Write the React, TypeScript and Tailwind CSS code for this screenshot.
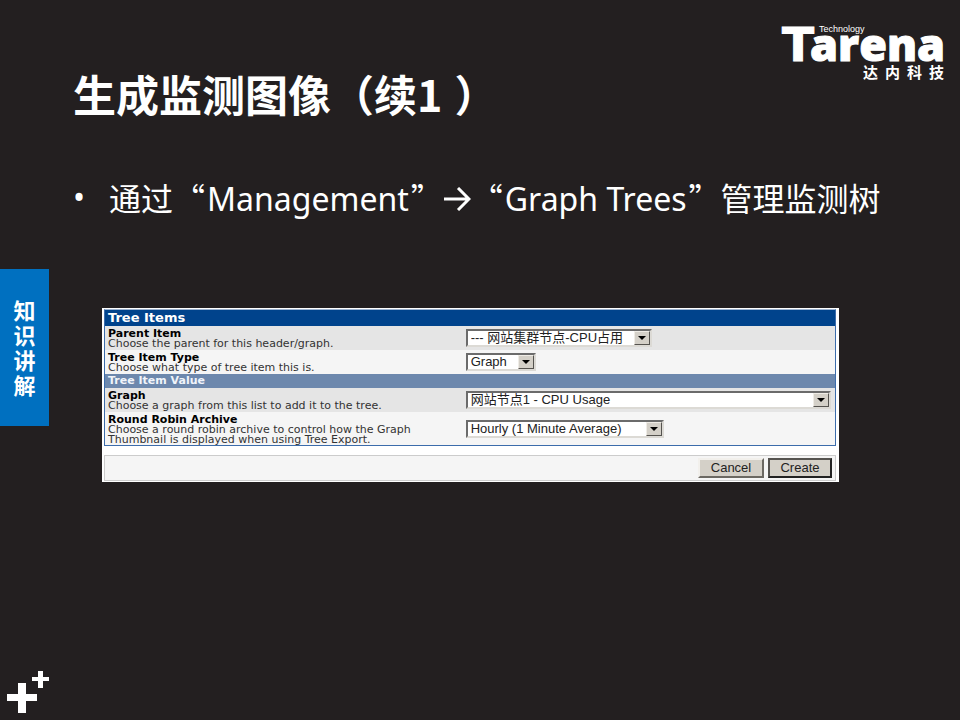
import React from "react";

type PickerProps = {
  id: string;
  width: string;
  options: string[];
};

function Picker({ id, width, options }: PickerProps) {
  return (
    <div
      className={`relative h-[18px] border-2 border-t-[#6b6b6b] border-l-[#6b6b6b] border-r-[#dcdad5] border-b-[#dcdad5] bg-white ${width}`}
    >
      <select
        id={id}
        className="block h-full w-full appearance-none bg-transparent pl-[3px] font-['Liberation_Sans','Noto_Sans_CJK_SC',sans-serif] text-[13px] leading-[14px] text-[#222222]"
      >
        {options.map((option) => (
          <option key={option}>{option}</option>
        ))}
      </select>
      <span className="pointer-events-none absolute inset-y-0 right-0 flex w-4 items-center justify-center border border-t-[#efece6] border-l-[#efece6] border-r-[#55534f] border-b-[#55534f] bg-[#d4d0c8]">
        <svg width="8" height="4" viewBox="0 0 8 4" aria-hidden="true">
          <path d="M0 0H8L4 4Z" fill="#000" />
        </svg>
      </span>
    </div>
  );
}

type FieldProps = PickerProps & {
  label: string;
  hint: string;
  tone: string;
};

function Field({ id, label, hint, tone, width, options }: FieldProps) {
  return (
    <div className={`grid min-h-6 grid-cols-[49%_1fr] ${tone}`}>
      <div className="pt-[3px] pr-4 pl-[3px] text-[11px] leading-[10px]">
        <label htmlFor={id} className="block font-bold text-black">
          {label}
        </label>
        <p className="text-[#333333]">{hint}</p>
      </div>
      <div className="self-center pr-1 pl-[3px]">
        <Picker id={id} width={width} options={options} />
      </div>
    </div>
  );
}

function TreeItemForm() {
  return (
    <form
      onSubmit={(event) => event.preventDefault()}
      className="bg-white py-px pr-[3px] pl-[2px] font-['DejaVu_Sans',sans-serif]"
    >
      <div className="border border-t-[#9db4d3] border-r-[#3c6cab] border-b-[#3c6cab] border-l-[#3c6cab]">
        <h2 className="bg-[#00438c] pl-[3px] text-[13px] leading-4 font-bold text-white">Tree Items</h2>
        <Field
          id="parent-item"
          label="Parent Item"
          hint="Choose the parent for this header/graph."
          tone="bg-[#e5e5e5]"
          width="w-[186px]"
          options={["--- 网站集群节点-CPU占用"]}
        />
        <Field
          id="item-type"
          label="Tree Item Type"
          hint="Choose what type of tree item this is."
          tone="bg-[#f5f5f5]"
          width="w-[70px]"
          options={["Graph"]}
        />
        <h3 className="bg-[#6d88ad] pl-[3px] text-[11px] leading-[14px] font-bold text-[#f0f4fa]">
          Tree Item Value
        </h3>
        <Field
          id="graph"
          label="Graph"
          hint="Choose a graph from this list to add it to the tree."
          tone="bg-[#e5e5e5]"
          width="w-full"
          options={["网站节点1 - CPU Usage"]}
        />
        <Field
          id="archive"
          label="Round Robin Archive"
          hint="Choose a round robin archive to control how the Graph Thumbnail is displayed when using Tree Export."
          tone="bg-[#f5f5f5]"
          width="w-[198px]"
          options={["Hourly (1 Minute Average)"]}
        />
      </div>
      <div className="mt-[9px] flex h-[26px] items-center justify-end gap-1 border border-[#cccccc] bg-[#f5f5f5] pr-[3px] font-['Liberation_Sans',sans-serif] text-[13px] leading-4 text-[#222222]">
        <button
          type="button"
          className="h-5 w-[66px] border-2 border-t-[#f2f0ec] border-l-[#f2f0ec] border-r-[#6b6862] border-b-[#6b6862] bg-[#d4d0c8]"
        >
          Cancel
        </button>
        <button
          type="submit"
          className="h-5 w-16 border-2 border-t-[#55534f] border-l-[#55534f] border-r-[#222222] border-b-[#222222] bg-[#d4d0c8]"
        >
          Create
        </button>
      </div>
    </form>
  );
}

function Logo() {
  return (
    <svg width="187" height="84" viewBox="0 0 187 84" role="img" aria-label="Tarena Technology 达内科技" fill="#fff">
      <g fontWeight="800" stroke="#fff" strokeWidth="1">
        <text x="9" y="61" fontFamily="'DejaVu Sans', sans-serif" fontSize="47">
          T
        </text>
        <text x="37" y="61" fontFamily="'Open Sans', sans-serif" fontSize="45">
          arena
        </text>
      </g>
      <text x="46" y="32" fontFamily="'Liberation Sans', sans-serif" fontSize="9">
        Technology
      </text>
      <g fontFamily="'Noto Sans CJK SC', sans-serif" fontWeight="700" fontSize="15">
        <text x="90" y="78">达</text>
        <text x="112" y="78">内</text>
        <text x="134" y="78">科</text>
        <text x="156" y="78">技</text>
      </g>
    </svg>
  );
}

function CjkQuote({ children }: { children: string }) {
  return <span className="font-['Noto_Sans_CJK_SC',sans-serif]">{children}</span>;
}

function Arrow() {
  return (
    <svg width="28" height="24" viewBox="0 0 28 24" className="inline-block align-baseline" role="img" aria-label="→">
      <path d="M1 12H26M15 1L26 12L15 23" fill="none" stroke="#fff" strokeWidth="3" />
    </svg>
  );
}

export default function App() {
  return (
    <div className="flex min-h-screen bg-[#231f20] text-white">
      <aside className="flex w-[49px] shrink-0 flex-col justify-between pt-[269px] pb-[7px]">
        <div className="flex h-[157px] flex-col items-center justify-center bg-[#0070c0] pb-[2px] font-['Noto_Sans_CJK_SC',sans-serif] text-[22px] leading-[25px] font-bold">
          {["知", "识", "讲", "解"].map((character) => (
            <span key={character}>{character}</span>
          ))}
        </div>
        <svg width="49" height="42" viewBox="0 0 49 42" fill="#fff" aria-hidden="true">
          <path d="M18 12h8v11h11v7H26v12h-8V30H7v-7h11Z" />
          <path d="M38 0h5v6h6v4h-6v7h-5v-7h-6V6h6Z" />
        </svg>
      </aside>

      <main className="min-w-0 flex-1">
        <header className="flex items-start justify-between pl-6">
          <h1 className="pt-[61px] font-['Noto_Sans_CJK_SC',sans-serif] text-[43px] leading-[64px] font-bold">
            生成监测图像（续1<span className="pl-3">）</span>
          </h1>
          <div className="shrink-0">
            <Logo />
          </div>
        </header>

        <ul className="mt-12 pl-6 font-['Noto_Sans','Noto_Sans_CJK_SC',sans-serif] text-[32px] leading-[48px]">
          <li className="flex">
            <span className="w-9 shrink-0">•</span>
            <p className="whitespace-nowrap">
              通过
              <CjkQuote>“</CjkQuote>
              <span className="px-[2px]">Management</span>
              <CjkQuote>”</CjkQuote>
              <Arrow />
              <CjkQuote>“</CjkQuote>
              <span className="px-[2px]">Graph Trees</span>
              <CjkQuote>”</CjkQuote>
              管理监测树
            </p>
          </li>
        </ul>

        <section className="mt-[85px] mr-[121px] ml-[53px]">
          <TreeItemForm />
        </section>
      </main>
    </div>
  );
}
